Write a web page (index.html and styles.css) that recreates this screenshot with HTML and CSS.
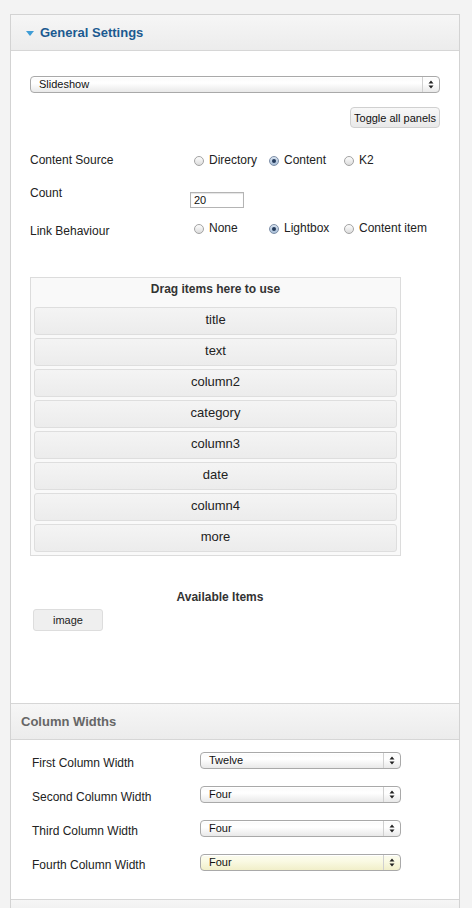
FILE: index.html
```html
<!DOCTYPE html>
<html>
<head>
<meta charset="utf-8">
<link rel="stylesheet" href="styles.css">
</head>
<body>
<div class="accordion">
  <div class="panel-head">
    <span class="tri"></span><h3 class="title-open">General Settings</h3>
  </div>
  <div class="panel-body gs">
    <div class="select wide"><span class="val">Slideshow</span><span class="arrows"><svg width="6" height="9" viewBox="0 0 6 9"><path d="M0.5 3.5 L3 0.5 L5.5 3.5Z M0.5 5.5 L3 8.5 L5.5 5.5Z" fill="#222"/></svg></span></div>
    <div class="toggle-row"><button class="btn-toggle">Toggle all panels</button></div>

    <div class="form-row r1">
      <div class="lbl">Content Source</div>
      <div class="radios">
        <span class="opt"><span class="radio"></span>Directory</span>
        <span class="opt"><span class="radio on"></span>Content</span>
        <span class="opt"><span class="radio"></span>K2</span>
      </div>
    </div>
    <div class="form-row r2">
      <div class="lbl">Count</div>
      <div class="input">20</div>
    </div>
    <div class="form-row r3">
      <div class="lbl">Link Behaviour</div>
      <div class="radios up">
        <span class="opt"><span class="radio"></span>None</span>
        <span class="opt"><span class="radio on"></span>Lightbox</span>
        <span class="opt"><span class="radio"></span>Content item</span>
      </div>
    </div>

    <div class="dropbox">
      <div class="drop-head">Drag items here to use</div>
      <div class="item">title</div>
      <div class="item">text</div>
      <div class="item">column2</div>
      <div class="item">category</div>
      <div class="item">column3</div>
      <div class="item">date</div>
      <div class="item">column4</div>
      <div class="item">more</div>
    </div>

    <div class="avail-title">Available Items</div>
    <div class="avail"><div class="chip">image</div></div>
  </div>

  <div class="panel-head second">
    <h3 class="title-closed">Column Widths</h3>
  </div>
  <div class="panel-body cw">
    <div class="cw-row"><div class="cw-lbl">First Column Width</div><div class="select narrow"><span class="val">Twelve</span><span class="arrows"><svg width="6" height="9" viewBox="0 0 6 9"><path d="M0.5 3.5 L3 0.5 L5.5 3.5Z M0.5 5.5 L3 8.5 L5.5 5.5Z" fill="#222"/></svg></span></div></div>
    <div class="cw-row"><div class="cw-lbl">Second Column Width</div><div class="select narrow"><span class="val">Four</span><span class="arrows"><svg width="6" height="9" viewBox="0 0 6 9"><path d="M0.5 3.5 L3 0.5 L5.5 3.5Z M0.5 5.5 L3 8.5 L5.5 5.5Z" fill="#222"/></svg></span></div></div>
    <div class="cw-row"><div class="cw-lbl">Third Column Width</div><div class="select narrow"><span class="val">Four</span><span class="arrows"><svg width="6" height="9" viewBox="0 0 6 9"><path d="M0.5 3.5 L3 0.5 L5.5 3.5Z M0.5 5.5 L3 8.5 L5.5 5.5Z" fill="#222"/></svg></span></div></div>
    <div class="cw-row"><div class="cw-lbl">Fourth Column Width</div><div class="select narrow focus"><span class="val">Four</span><span class="arrows"><svg width="6" height="9" viewBox="0 0 6 9"><path d="M0.5 3.5 L3 0.5 L5.5 3.5Z M0.5 5.5 L3 8.5 L5.5 5.5Z" fill="#222"/></svg></span></div></div>
  </div>
  <div class="panel-head second last"></div>
</div>
</body>
</html>
```
FILE: styles.css
```css
* { box-sizing: border-box; }
html, body { margin: 0; padding: 0; }
body {
  background: #f3f3f3;
  font-family: "Liberation Sans", Arial, Helvetica, sans-serif;
  color: #222;
  padding: 14px 12px 0 10px;
  overflow: hidden;
  height: 908px;
}
.accordion {
  width: 450px;
  border: 1px solid #d3d3d3;
  border-bottom: none;
  background: #fff;
}
.panel-head {
  height: 36px;
  border-bottom: 1px solid #d6d6d6;
  background: linear-gradient(#f6f6f6, #ececec);
  display: flex;
  align-items: center;
}
.panel-head.second { height: 37px; border-top: 1px solid #d6d6d6; }
.panel-head.last { height: 20px; border-bottom: none; }
.tri {
  width: 0; height: 0;
  border-left: 4.5px solid transparent;
  border-right: 4.5px solid transparent;
  border-top: 5px solid #3f9dd6;
  margin-left: 15px;
  margin-right: 6px;
  margin-top: 2px;
}
h3 { margin: 0; font-size: 13px; font-weight: bold; }
.title-open { color: #1b5a90; }
.title-closed { color: #666; margin-left: 10px; }

.panel-body.gs {
  height: 652px;
  padding: 25px 19px 0 19px;
}
.select {
  height: 17px;
  border: 1px solid #a9a9a9;
  border-radius: 4px;
  background: linear-gradient(#fafafa, #fff 40%, #e9e9e9);
  display: flex;
  align-items: center;
  font-size: 11px;
  color: #111;
  box-shadow: inset 0 1px 0 #fff;
}
.select .val { flex: 1; padding-left: 8px; line-height: 15px; }
.select .arrows {
  width: 17px;
  height: 15px;
  border-left: 1px solid #d0d0d0;
  display: flex;
  align-items: center;
  justify-content: center;
}
.select.wide { width: 410px; }
.select.narrow { width: 201px; }
.select.focus { background: linear-gradient(#fbfbee, #fafae4 40%, #f1efc9); }

.toggle-row { display: flex; justify-content: flex-end; margin-top: 14px; }
.btn-toggle {
  width: 90px; height: 21px;
  padding: 0;
  font-family: inherit;
  font-size: 11px;
  color: #111;
  border: 1px solid #d0d0d0;
  border-radius: 4px;
  background: linear-gradient(#f8f8f8, #e9e9e9);
}

.form-row { display: flex; align-items: flex-start; }
.lbl { width: 160px; flex-shrink: 0; font-size: 12px; line-height: 18px; color: #222; }
.form-row.r1 { margin-top: 23px; height: 34px; }
.form-row.r2 { height: 37px; }
.form-row.r3 { height: 22px; }
.form-row.r2 .lbl { margin-top: -1px; }
.radios { display: flex; margin-left: 4px; font-size: 12px; line-height: 18px; }
.radios.up { margin-top: -3px; }
.opt { min-width: 75px; display: flex; align-items: center; white-space: nowrap; color: #222; }
.radio {
  flex-shrink: 0;
  width: 10px; height: 10px;
  border-radius: 50%;
  border: 1px solid #a3a3a3;
  background: linear-gradient(#fdfdfd, #dcdcdc);
  margin-right: 5px;
  margin-top: 1px;
  display: flex; align-items: center; justify-content: center;
}
.radio.on {
  border-color: #7d8fa8;
  background: linear-gradient(#d8e3f0, #a7bdd6);
}
.radio.on::after {
  content: "";
  width: 4px; height: 4px;
  border-radius: 50%;
  background: #233a5b;
}
.input {
  width: 54px; height: 16px;
  margin-top: 7px;
  border: 1px solid #b4b4b4;
  font-size: 11px;
  line-height: 14px;
  padding-left: 3px;
  color: #111;
  box-shadow: inset 0 1px 1px #e4e4e4;
}

.dropbox {
  width: 371px;
  margin-top: 33px;
  border: 1px solid #dcdcdc;
  background: #f9f9f9;
  padding: 0 3px 3px 3px;
}
.drop-head {
  height: 26px;
  font-size: 12px;
  font-weight: bold;
  line-height: 22px;
  text-align: center;
  color: #333;
}
.item {
  height: 28px;
  margin-top: 3px;
  border: 1px solid #dedede;
  border-radius: 3px;
  background: linear-gradient(#f4f4f4, #ececec);
  font-size: 13px;
  line-height: 24px;
  text-align: center;
  color: #222;
}
.avail-title {
  width: 380px;
  margin-top: 33px;
  font-size: 12px;
  font-weight: bold;
  line-height: 16px;
  text-align: center;
  color: #333;
}
.avail { margin-top: 4px; padding-left: 3px; }
.chip {
  width: 70px; height: 22px;
  border: 1px solid #ddd;
  border-radius: 3px;
  background: #efefef;
  font-size: 11px;
  line-height: 20px;
  text-align: center;
  color: #222;
}

.panel-body.cw {
  height: 159px;
  padding: 12px 0 0 21px;
}
.cw-row { display: flex; height: 34px; align-items: flex-start; }
.cw-lbl { width: 168px; flex-shrink: 0; font-size: 12px; line-height: 18px; margin-top: 2px; color: #222; }
```
